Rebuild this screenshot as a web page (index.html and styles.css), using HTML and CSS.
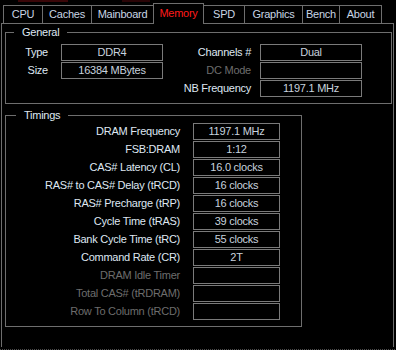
FILE: index.html
```html
<!DOCTYPE html>
<html lang="en">
<head>
    <meta charset="UTF-8">
    <meta name="viewport" content="width=device-width, initial-scale=1.0">
    <title>CPU-Z Memory</title>
    <link rel="stylesheet" href="styles.css">
</head>
<body>

<div class="glow"></div>

<div class="tabs">
    <span class="tab tab-cpu">CPU</span>
    <span class="tab tab-caches">Caches</span>
    <span class="tab tab-mainboard">Mainboard</span>
    <span class="tab tab-memory active">Memory</span>
    <span class="tab tab-spd">SPD</span>
    <span class="tab tab-graphics">Graphics</span>
    <span class="tab tab-bench">Bench</span>
    <span class="tab tab-about">About</span>
</div>

<div class="panel">
    <fieldset class="group general">
        <legend>General</legend>
        <div class="general-cols">
            <div class="col-left">
                <span class="label">Type</span><span class="field">DDR4</span>
                <span class="label">Size</span><span class="field">16384 MBytes</span>
            </div>
            <div class="col-right">
                <span class="label">Channels #</span><span class="field">Dual</span>
                <span class="label off">DC Mode</span><span class="field"></span>
                <span class="label">NB Frequency</span><span class="field">1197.1 MHz</span>
            </div>
        </div>
    </fieldset>

    <fieldset class="group timings">
        <legend>Timings</legend>
        <div class="timing-grid">
            <span class="label">DRAM Frequency</span><span class="field">1197.1 MHz</span>
            <span class="label">FSB:DRAM</span><span class="field">1:12</span>
            <span class="label">CAS# Latency (CL)</span><span class="field">16.0 clocks</span>
            <span class="label">RAS# to CAS# Delay (tRCD)</span><span class="field">16 clocks</span>
            <span class="label">RAS# Precharge (tRP)</span><span class="field">16 clocks</span>
            <span class="label">Cycle Time (tRAS)</span><span class="field">39 clocks</span>
            <span class="label">Bank Cycle Time (tRC)</span><span class="field">55 clocks</span>
            <span class="label">Command Rate (CR)</span><span class="field">2T</span>
            <span class="label off">DRAM Idle Timer</span><span class="field"></span>
            <span class="label off">Total CAS# (tRDRAM)</span><span class="field"></span>
            <span class="label off">Row To Column (tRCD)</span><span class="field"></span>
        </div>
    </fieldset>
</div>

<div class="status"></div>

</body>
</html>
```

FILE: styles.css
```css
body {
    margin: 0;
    background-color: #000;
    font-family: "Liberation Sans", Arial, sans-serif;
    font-size: 11px;
    letter-spacing: -0.25px;
    color: #dfe7f2;
    width: 396px;
    height: 350px;
    overflow: hidden;
    position: relative;
}

.glow {
    position: absolute;
    top: 0;
    left: 0;
    width: 396px;
    height: 2px;
    background: linear-gradient(to right, transparent 18px, #3a0608 18px, #3a0608 68px, transparent 68px, transparent 122px, #2a0406 122px, #2a0406 150px, transparent 150px);
}

.tabs {
    display: flex;
    align-items: flex-start;
    height: 18px;
    margin-top: 5px;
    padding-left: 4px;
}

.tab {
    box-sizing: border-box;
    height: 18px;
    line-height: 17px;
    margin-left: -1px;
    border: 1px solid #6e6e6e;
    border-bottom: none;
    color: #c9d5e4;
    text-align: center;
    white-space: nowrap;
}

.tab-cpu { width: 40px; }
.tab-caches { width: 50px; }
.tab-mainboard { width: 63px; }
.tab-memory { width: 51px; }
.tab-spd { width: 42px; }
.tab-graphics { width: 59px; }
.tab-bench { width: 38px; }
.tab-about { width: 43px; }

.tab.active {
    position: relative;
    z-index: 1;
    height: 21px;
    margin-top: -2px;
    line-height: 19px;
    background-color: #000;
    color: #ff1a1a;
}

.panel {
    box-sizing: border-box;
    width: 393px;
    height: 324px;
    margin-left: 1px;
    padding: 2px 0 0 3px;
    border: 1px solid #6e6e6e;
    border-bottom: none;
}

.group {
    box-sizing: border-box;
    margin: 0;
    padding: 0;
    border: 1px solid #6e6e6e;
}

.group legend {
    line-height: 13px;
    padding: 0 8px;
    color: #dfe7f2;
}

.general {
    width: 387px;
    padding-bottom: 6px;
}

.general legend {
    margin-left: 8px;
}

.general-cols {
    display: flex;
    padding-top: 5px;
}

.col-left,
.col-right {
    display: grid;
    grid-auto-rows: 17px;
    row-gap: 1px;
    align-content: start;
}

.col-left {
    grid-template-columns: 42px 102px;
    column-gap: 13px;
}

.col-right {
    grid-template-columns: 88px 102px;
    column-gap: 9px;
}

.label {
    text-align: right;
    line-height: 17px;
    white-space: nowrap;
}

.label.off {
    color: #6d6d6d;
}

.field {
    box-sizing: border-box;
    height: 17px;
    border: 1px solid #7a7a7a;
    text-align: center;
    line-height: 15px;
    color: #c8d2de;
    white-space: nowrap;
}

.timings {
    width: 297px;
    margin-top: 5px;
    padding-bottom: 6px;
}

.timings legend {
    margin-left: 10px;
}

.timing-grid {
    display: grid;
    grid-template-columns: 174px 87px;
    grid-auto-rows: 17px;
    column-gap: 13px;
    row-gap: 1px;
    padding-top: 1px;
}

.status {
    height: 1px;
    margin-top: 2px;
    background: repeating-linear-gradient(to right, #4a4a4a 0, #4a4a4a 1px, transparent 1px, transparent 2px);
}
```
